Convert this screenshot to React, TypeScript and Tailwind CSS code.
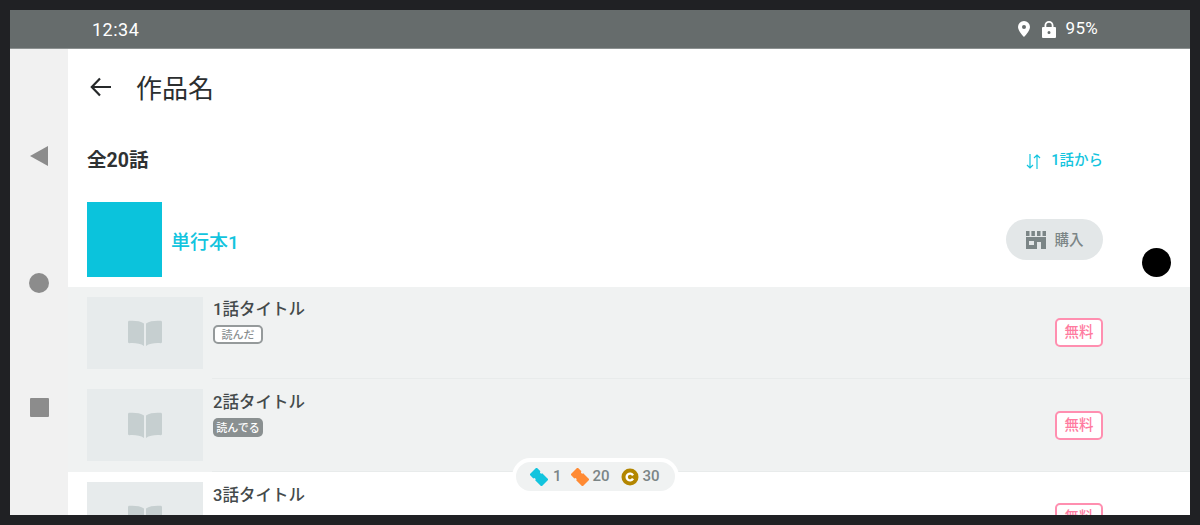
import React from 'react';

const FONT = "font-['Roboto','Noto_Sans_CJK_JP',sans-serif]";

const BookIcon = () => (
  <svg width="36" height="28" viewBox="0 0 36 28" fill="#c6cfd0">
    <path d="M1 3.200c0-.8.6-1.400 1.400-1.400C8 1.500 13.500 2 17 4.500V27c-3.500-2.500-9-3.200-14.600-2.800C1.600 24.300 1 23.700 1 23z" />
    <path d="M35 3.200c0-.8-.6-1.400-1.400-1.400C28 1.500 22.500 2 19 4.500V27c3.500-2.500 9-3.200 14.600-2.800.8.100 1.400-.5 1.400-1.200z" />
  </svg>
);

const StoreIcon = () => (
  <svg width="20" height="18" viewBox="0 0 20 18" fill="#7b8586" className="mt-[1px]">
    <path d="M0 0h3.500v5H0zM5.400 0h3.500v5H5.400zM11 0h3.500v5H11zM16.500 0H20v5h-3.500z" />
    <path fillRule="evenodd" d="M0 6h20v12h-5v-7h-4v7H0zM3 10v4h5v-4z" />
  </svg>
);

const TicketIcon = ({ color }: { color: string }) => (
  <svg width="18" height="18" viewBox="0 0 18 18" fill={color}>
    <path
      transform="rotate(45 9 9)"
      d="M.5 4h5.500a1.300 1.300 0 0 0 2.600 0h8.900v10H8.600a1.300 1.300 0 0 0-2.600 0H.5z"
    />
  </svg>
);

const CoinIcon = () => (
  <svg width="18" height="18" viewBox="0 0 18 18">
    <circle cx="9" cy="9" r="8.500" fill="#b38600" />
    <path d="M12 7.300A3.400 3.400 0 1 0 12 10.700" fill="none" stroke="#fff" strokeWidth="2.400" />
  </svg>
);

const FreeBadge = () => (
  <div className="flex h-[29px] w-[48px] shrink-0 items-center justify-center rounded-[5px] border-2 border-[#ff8fb0] bg-white text-[14.500px] font-medium text-[#ff7ba0]">
    無料
  </div>
);

const episodes = [
  { no: 1, badge: 'done', bg: 'bg-[#f0f2f2]', height: 'h-[92px]', titleTop: 'pt-[10px]', freeTop: 'mt-[31px]' },
  { no: 2, badge: 'reading', bg: 'bg-[#f0f2f2]', height: 'h-[93px]', titleTop: 'pt-[11px]', freeTop: 'mt-[32px]' },
  { no: 3, badge: null, bg: 'bg-white', height: 'h-[93px]', titleTop: 'pt-[11px]', freeTop: 'mt-[31px]' },
];

type EpisodeRowProps = {
  no: number;
  badge: string | null;
  bg: string;
  height: string;
  titleTop: string;
  freeTop: string;
};

const EpisodeRow = ({ no, badge, bg, height, titleTop, freeTop }: EpisodeRowProps) => (
  <div className={`flex shrink-0 pl-[19px] ${height} ${bg}`}>
    <div className="mt-[10px] flex h-[72px] w-[116px] shrink-0 items-center justify-center bg-[#e7ebec]">
      <BookIcon />
    </div>
    <div className="ml-[9px] flex flex-1 items-start justify-between border-b border-[#e8ebeb] pr-[87px]">
      <div className={`pl-[1px] ${titleTop}`}>
        <div className="text-[16.500px] leading-[26px] font-medium text-[#444a4b]">{no}話タイトル</div>
        {badge === 'done' && (
          <div className="mt-[2px] flex h-[19px] w-[50px] items-center justify-center rounded-[5px] border-2 border-[#959a9b] bg-white pt-[1px] text-[11px] leading-none font-medium text-[#8a9091]">
            読んだ
          </div>
        )}
        {badge === 'reading' && (
          <div className="mt-[2px] flex h-[19px] w-[50px] items-center justify-center rounded-[5px] bg-[#8a9091] pt-[1px] text-[11px] leading-none font-medium whitespace-nowrap text-white">
            読んでる
          </div>
        )}
      </div>
      <div className={freeTop}>
        <FreeBadge />
      </div>
    </div>
  </div>
);

export default function App() {
  return (
    <div className={`h-[525px] w-[1200px] overflow-hidden bg-[#202124] p-[10px] ${FONT}`}>
      <div className="relative flex h-[505px] w-[1180px] flex-col overflow-hidden bg-white">
        {/* status bar */}
        <div className="flex h-[39px] shrink-0 items-center justify-between border-b border-[#8c9191] bg-[#666c6c] pr-[92px] pl-[82px] text-[17px] text-white">
          <span className="text-[18px] tracking-[0.5px]">12:34</span>
          <div className="flex items-center">
            <svg width="14" height="16" viewBox="0 0 14 16" fill="#fff" className="mr-[11px]">
              <path fillRule="evenodd" d="M7 0a6 6 0 0 1 6 6c0 4-6 10-6 10S1 10 1 6a6 6 0 0 1 6-6zm0 4a2 2 0 1 0 0 4 2 2 0 0 0 0-4z" />
            </svg>
            <svg width="14" height="17" viewBox="0 0 14 17" fill="#fff" className="mr-[10px]">
              <path fillRule="evenodd" d="M2.500 6V4.500a4.500 4.500 0 0 1 9 0V6H13a1 1 0 0 1 1 1v9a1 1 0 0 1-1 1H1a1 1 0 0 1-1-1V7a1 1 0 0 1 1-1zM4.300 6h5.400V4.500a2.700 2.700 0 0 0-5.400 0zM7 10a1.500 1.500 0 1 0 0 3 1.500 1.500 0 0 0 0-3z" />
            </svg>
            <span className="tracking-[0.3px]">95%</span>
          </div>
        </div>

        <div className="flex min-h-0 flex-1">
          {/* nav bar */}
          <div className="flex w-[58px] shrink-0 flex-col items-center bg-[#f1f1f1] pt-[97px]">
            <div className="h-0 w-0 border-y-[10.500px] border-r-[18px] border-y-transparent border-r-[#8c8c8c]" />
            <div className="mt-[107px] h-[20px] w-[20px] rounded-full bg-[#8c8c8c]" />
            <div className="mt-[105px] h-[19px] w-[19px] rounded-[1px] bg-[#8c8c8c]" />
          </div>

          {/* content */}
          <div className="flex min-w-0 flex-1 flex-col">
            <div className="flex h-[80px] shrink-0 items-center pl-[22px]">
              <svg width="22" height="20" viewBox="0 0 22 20" fill="none" stroke="#26292a" strokeWidth="2.200" className="mb-[4px]">
                <path d="M21 10H2M10 1.500 1.800 10l8.200 8.500" />
              </svg>
              <h1 className="ml-[24px] text-[26px] leading-none text-[#2b2e2f]">作品名</h1>
            </div>

            <div className="flex h-[64px] shrink-0 items-center justify-between pr-[87px] pl-[19px]">
              <span className="text-[19.500px] font-bold text-[#2f3233]">全20話</span>
              <div className="flex items-center text-[14.500px] font-medium text-[#12c4de]">
                <svg width="16" height="15" viewBox="0 0 16 15" fill="none" stroke="#12c4de" strokeWidth="1.200" className="mr-[9px]">
                  <path d="M4 0v14M1 11l3 3 3-3M11 15V1M8 4l3-3 3 3" />
                </svg>
                1話から
              </div>
            </div>

            <div className="mt-[9px] flex h-[85px] shrink-0 items-start justify-between pr-[87px] pl-[19px]">
              <div className="flex items-center">
                <div className="h-[75px] w-[75px] bg-[#0bc3dc]" />
                <span className="ml-[9px] pt-[7px] text-[19px] font-medium text-[#12c4de]">単行本1</span>
              </div>
              <div className="mt-[17px] flex h-[41px] w-[97px] items-center justify-center rounded-full bg-[#e3e7e8] text-[14.500px] font-medium text-[#7b8586]">
                <StoreIcon />
                <span className="ml-[9px] pt-[3px]">購入</span>
              </div>
            </div>

            {episodes.map((ep) => (
              <EpisodeRow key={ep.no} {...ep} />
            ))}
          </div>
        </div>

        {/* floating balance pill */}
        <div className="absolute top-[448px] left-[502px] box-content flex h-[29px] w-[145px] items-center rounded-full border-[4px] border-white bg-[#f0f2f2] pl-[14px] text-[15px] font-medium text-[#7b8586]">
          <TicketIcon color="#12c4de" />
          <span className="mr-[9px] ml-[5px]">1</span>
          <TicketIcon color="#ff8a33" />
          <span className="mr-[11px] ml-[4px]">20</span>
          <CoinIcon />
          <span className="ml-[4px]">30</span>
        </div>

        {/* floating dot */}
        <div className="absolute top-[238px] left-[1132px] h-[29px] w-[29px] rounded-full bg-black" />
      </div>
    </div>
  );
}
